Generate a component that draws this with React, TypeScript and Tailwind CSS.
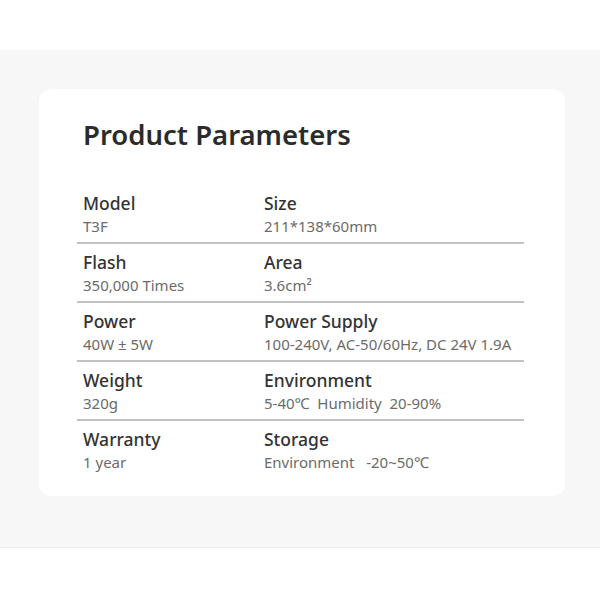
import React from "react";

const rows = [
  { l1: "Model", v1: "T3F", l2: "Size", v2: "211*138*60mm" },
  { l1: "Flash", v1: "350,000 Times", l2: "Area", v2: "3.6cm²" },
  { l1: "Power", v1: "40W ± 5W", l2: "Power Supply", v2: "100-240V, AC-50/60Hz, DC 24V 1.9A" },
  { l1: "Weight", v1: "320g", l2: "Environment", v2: "5-40℃  Humidity  20-90%" },
  { l1: "Warranty", v1: "1 year", l2: "Storage", v2: "Environment   -20~50℃" },
];

export default function App() {
  return (
    <div className="w-[600px] h-[600px] bg-white flex flex-col" style={{ fontFamily: '"Noto Sans", "Open Sans", sans-serif' }}>
      <div className="h-[50px] bg-white" />
      <div className="h-[497px] bg-[#f7f7f7] pt-[39px] pl-[39px]">
        <div className="w-[526px] h-[407px] bg-white rounded-[12px] pt-[26px]">
          <div className="pl-[44px] text-[27.5px] leading-[40px] font-semibold text-[#2b2b2b]">Product Parameters</div>
          <div className="ml-[38px] w-[447px] mt-[30px]">
            {rows.map((r, i) => (
              <div
                key={i}
                className={
                  "grid grid-cols-[181px_1fr] pl-[6px] pt-[6px] pb-[5px] " +
                  (i < rows.length - 1 ? "border-b-2 border-[#c2c2c2]" : "")
                }
              >
                <div className="flex flex-col">
                  <div className="text-[17.5px] leading-[24px] font-medium text-[#333]">{r.l1}</div>
                  <div className="text-[15px] leading-[22px] text-[#6b6b6b] whitespace-pre">{r.v1}</div>
                </div>
                <div className="flex flex-col">
                  <div className="text-[17.5px] leading-[24px] font-medium text-[#333]">{r.l2}</div>
                  <div className="text-[15px] leading-[22px] text-[#6b6b6b] whitespace-pre">{r.v2}</div>
                </div>
              </div>
            ))}
          </div>
        </div>
      </div>
      <div className="flex-1 bg-white border-t border-[#ececec]" />
    </div>
  );
}
